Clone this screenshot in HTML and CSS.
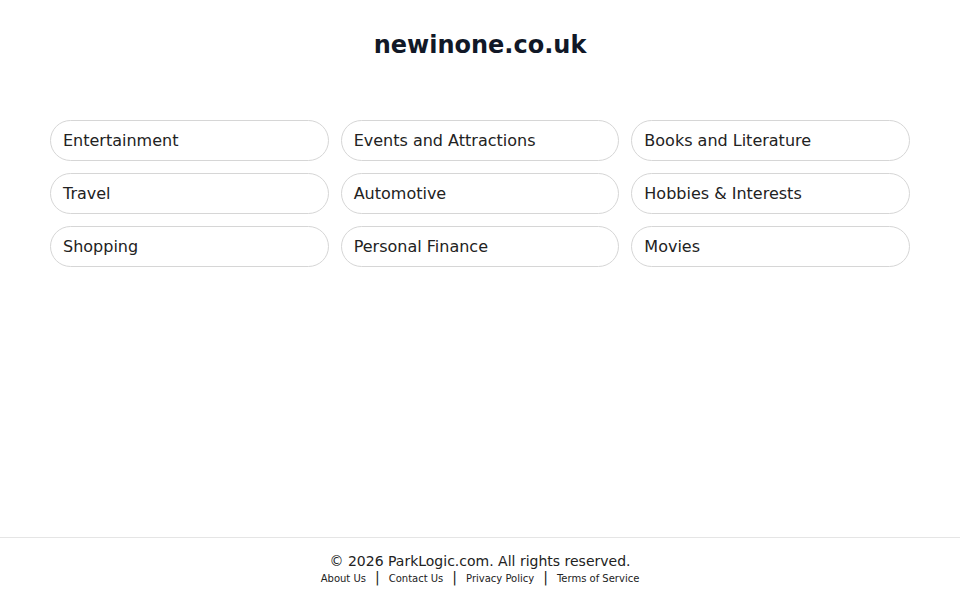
FILE: index.html
```html
<!DOCTYPE html>
<html>
<head>
<meta charset="utf-8">
<link rel="stylesheet" href="styles.css">
</head>
<body>
<div class="page">
  <header class="header">
    <h1 class="title">newinone.co.uk</h1>
  </header>
  <main class="main">
    <div class="grid">
      <a class="card" href="#">Entertainment</a>
      <a class="card" href="#">Events and Attractions</a>
      <a class="card" href="#">Books and Literature</a>
      <a class="card" href="#">Travel</a>
      <a class="card" href="#">Automotive</a>
      <a class="card" href="#">Hobbies &amp; Interests</a>
      <a class="card" href="#">Shopping</a>
      <a class="card" href="#">Personal Finance</a>
      <a class="card" href="#">Movies</a>
    </div>
  </main>
  <footer class="footer">
    <div class="copy">© 2026 ParkLogic.com. All rights reserved.</div>
    <div class="links">
      <a class="link" href="#">About Us</a><span class="sep">|</span><a class="link" href="#">Contact Us</a><span class="sep">|</span><a class="link" href="#">Privacy Policy</a><span class="sep">|</span><a class="link" href="#">Terms of Service</a>
    </div>
  </footer>
</div>
</body>
</html>
```
FILE: styles.css
```css
html, body {
  margin: 0;
  padding: 0;
  background: #ffffff;
}
body {
  font-family: "DejaVu Sans", sans-serif;
  color: #222222;
}
.page {
  display: flex;
  flex-direction: column;
  height: 100vh;
}
.header {
  padding-top: 31px;
  text-align: center;
}
.title {
  margin: 0;
  font-size: 24px;
  font-weight: bold;
  color: #111827;
}
.main {
  flex: 1;
  padding-top: 61px;
}
.grid {
  width: 860px;
  margin: 0 auto;
  display: grid;
  grid-template-columns: repeat(3, 1fr);
  gap: 12px;
}
.card {
  display: block;
  border: 1px solid #d6d6d6;
  border-radius: 21px;
  padding: 10px 12px;
  font-size: 16px;
  color: #222222;
  text-decoration: none;
}
.footer {
  height: 63px;
  box-sizing: border-box;
  border-top: 1px solid #e5e5e5;
  padding-top: 13px;
  text-align: center;
}
.copy {
  font-size: 14px;
  line-height: 20px;
}
.links {
  font-size: 10px;
  line-height: 12px;
  padding-top: 1px;
}
.link {
  color: #222222;
  text-decoration: none;
}
.sep {
  font-size: 14px;
  line-height: 10px;
  margin: 0 9px;
  color: #222222;
}
```
